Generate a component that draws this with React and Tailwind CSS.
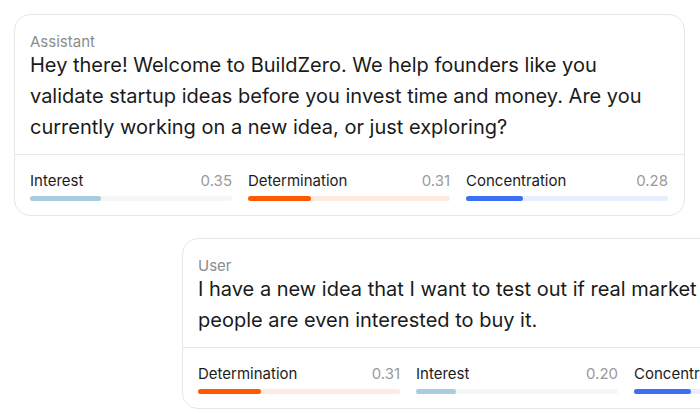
import React from "react";

const bars = {
  Interest: { fill: "bg-[#a8cce0]", track: "bg-[#f4f6f8]" },
  Determination: { fill: "bg-[#ff5a00]", track: "bg-[#fdebe1]" },
  Concentration: { fill: "bg-[#3a6ff6]", track: "bg-[#e8eefd]" },
};

function Metric({ name, value }) {
  const c = bars[name];
  return (
    <div className="w-[202px] shrink-0">
      <div className="flex items-center justify-between text-[15px] leading-5">
        <span className="text-[#1c1c1c]">{name}</span>
        <span className="text-[#9a9a9a]">{value.toFixed(2)}</span>
      </div>
      <div className={"mt-[5px] h-[5px] w-full rounded-full " + c.track}>
        <div className={"h-full rounded-full " + c.fill} style={{ width: value * 100 + "%" }} />
      </div>
    </div>
  );
}

function Message({ role, text, metrics, className = "", textWidth = "" }) {
  return (
    <div className={"w-[671px] shrink-0 rounded-2xl border border-[#e6e6e6] bg-white " + className}>
      <div className="px-[15px] pt-[18px] pb-[11px]">
        <div className="text-[15px] leading-[17px] text-[#8c8c8c]">{role}</div>
        <p className={"text-[20px] leading-[31px] text-[#1a1a1a] " + textWidth}>{text}</p>
      </div>
      <div className="flex gap-4 border-t border-[#e6e6e6] px-[15px] pt-4 pb-[14px]">
        {metrics.map((m) => (
          <Metric key={m[0]} name={m[0]} value={m[1]} />
        ))}
      </div>
    </div>
  );
}

export default function App() {
  return (
    <div
      className="w-[700px] h-[414px] overflow-hidden bg-white pt-[14px] pl-[14px]"
      style={{ fontFamily: "Inter, 'Noto Sans', sans-serif" }}
    >
      <Message
        role="Assistant"
        text="Hey there! Welcome to BuildZero. We help founders like you validate startup ideas before you invest time and money. Are you currently working on a new idea, or just exploring?"
        metrics={[
          ["Interest", 0.35],
          ["Determination", 0.31],
          ["Concentration", 0.28],
        ]}
      />
      <Message
        role="User"
        className="mt-[22px] ml-[168px]"
        textWidth="max-w-[530px]"
        text="I have a new idea that I want to test out if real market people are even interested to buy it."
        metrics={[
          ["Determination", 0.31],
          ["Interest", 0.2],
          ["Concentration", 0.28],
        ]}
      />
    </div>
  );
}
